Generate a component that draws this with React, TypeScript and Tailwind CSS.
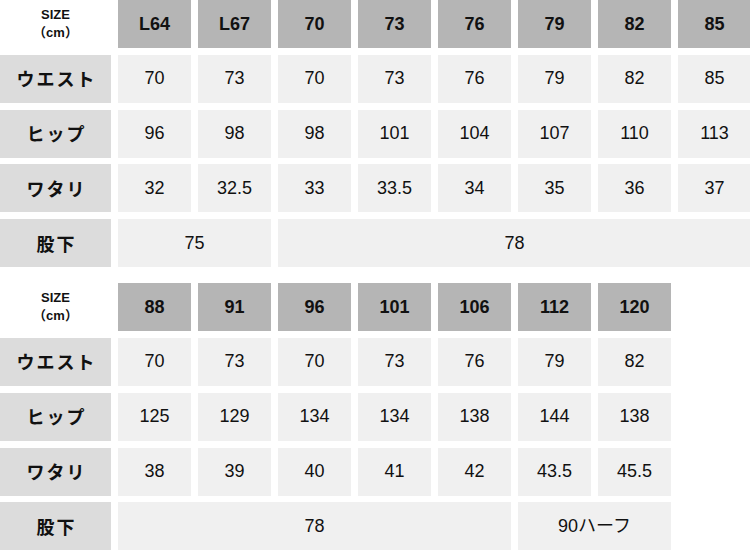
import React from "react";

type Cell = { v: string; span?: number };

const FONT = { fontFamily: '"Liberation Sans", Arial, "Noto Sans CJK JP", sans-serif' };

function Table({ heads, rows }: { heads: string[]; rows: { label: string; cells: Cell[] }[] }) {
  return (
    <div className="grid grid-cols-[111px_repeat(8,73px)] gap-x-[7px] gap-y-[6.8px]">
      <div className="h-[48px] flex flex-col items-center justify-center text-[13px] font-bold leading-[18px] text-[#111]">
        <span>SIZE</span>
        <span>（cm）</span>
      </div>
      {heads.map((h, i) => (
        <div key={i} className="h-[48px] bg-[#b5b5b5] flex items-center justify-center text-[18px] font-bold text-[#111]">
          {h}
        </div>
      ))}
      {Array.from({ length: 8 - heads.length }).map((_, i) => (
        <div key={"e" + i} />
      ))}
      {rows.map((r, ri) => (
        <React.Fragment key={ri}>
          <div
            className="h-[48px] bg-[#dcdcdc] flex items-center justify-center text-[18px] font-bold text-[#111] tracking-[2px] pl-[2px]"
            style={{ fontFamily: '"Noto Sans CJK JP", sans-serif' }}
          >
            {r.label}
          </div>
          {r.cells.map((c, ci) => (
            <div
              key={ci}
              className="h-[48px] bg-[#f0f0f0] flex items-center justify-center text-[18px] text-[#111]"
              style={c.span ? { gridColumn: `span ${c.span} / span ${c.span}` } : undefined}
            >
              {c.v}
            </div>
          ))}
          {Array.from({ length: 8 - r.cells.reduce((a, c) => a + (c.span || 1), 0) }).map((_, i) => (
            <div key={"f" + i} />
          ))}
        </React.Fragment>
      ))}
    </div>
  );
}

const c = (...vals: string[]): Cell[] => vals.map((v) => ({ v }));

export default function App() {
  return (
    <div className="w-[750px] h-[552px] bg-white overflow-hidden flex flex-col gap-[16px]" style={FONT}>
      <Table
        heads={["L64", "L67", "70", "73", "76", "79", "82", "85"]}
        rows={[
          { label: "ウエスト", cells: c("70", "73", "70", "73", "76", "79", "82", "85") },
          { label: "ヒップ", cells: c("96", "98", "98", "101", "104", "107", "110", "113") },
          { label: "ワタリ", cells: c("32", "32.5", "33", "33.5", "34", "35", "36", "37") },
          { label: "股下", cells: [{ v: "75", span: 2 }, { v: "78", span: 6 }] },
        ]}
      />
      <Table
        heads={["88", "91", "96", "101", "106", "112", "120"]}
        rows={[
          { label: "ウエスト", cells: c("70", "73", "70", "73", "76", "79", "82") },
          { label: "ヒップ", cells: c("125", "129", "134", "134", "138", "144", "138") },
          { label: "ワタリ", cells: c("38", "39", "40", "41", "42", "43.5", "45.5") },
          { label: "股下", cells: [{ v: "78", span: 5 }, { v: "90ハーフ", span: 2 }] },
        ]}
      />
    </div>
  );
}
